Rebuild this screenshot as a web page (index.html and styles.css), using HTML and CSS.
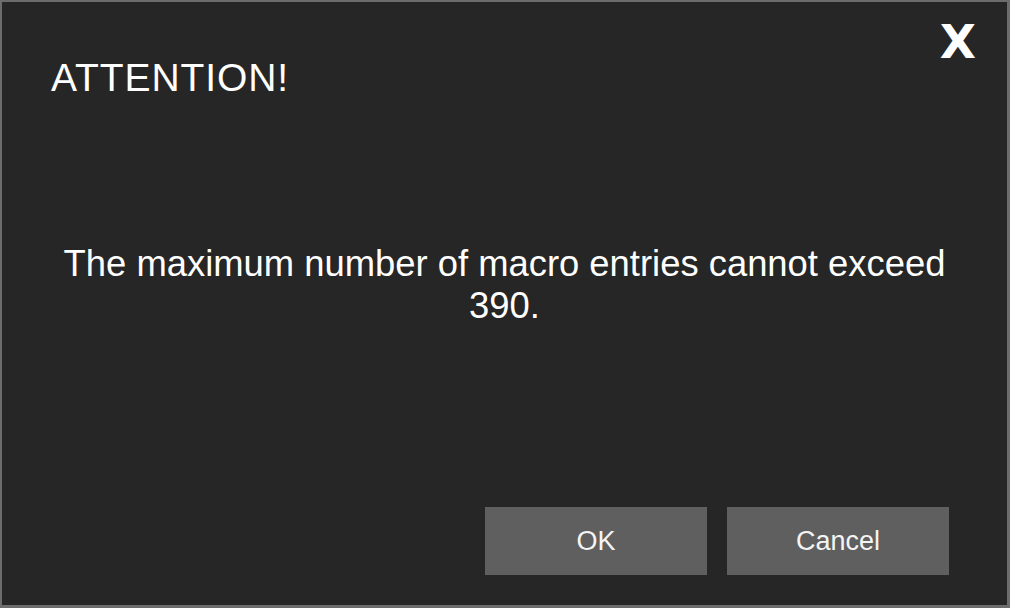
FILE: index.html
```html
<!DOCTYPE html>
<html>
<head>
<meta charset="utf-8">
<link rel="stylesheet" href="styles.css">
</head>
<body>
<div class="dialog">
  <div class="header">
    <div class="title">ATTENTION!</div>
    <div class="close">X</div>
  </div>
  <div class="message">The maximum number of macro entries cannot exceed 390.</div>
  <div class="footer">
    <div class="btn">OK</div>
    <div class="btn">Cancel</div>
  </div>
</div>
</body>
</html>
```
FILE: styles.css
```css
html, body {
  margin: 0;
  padding: 0;
  background: #262626;
}
.dialog {
  box-sizing: border-box;
  width: 1010px;
  height: 608px;
  border: 2px solid #6c6c6c;
  border-right-width: 3px;
  border-bottom-width: 3px;
  background: #262626;
  color: #ffffff;
  font-family: "Liberation Sans", Arial, sans-serif;
  display: flex;
  flex-direction: column;
}
.header {
  display: flex;
  justify-content: space-between;
  align-items: flex-start;
  padding: 0 31px 0 49px;
}
.title {
  font-size: 39px;
  margin-top: 54px;
  line-height: 44px;
  letter-spacing: 0.9px;
}
.close {
  font-family: "DejaVu Sans", sans-serif;
  font-size: 47px;
  font-weight: bold;
  line-height: 46px;
  margin-top: 17px;
}
.message {
  flex: 1;
  display: flex;
  align-items: center;
  justify-content: center;
  text-align: center;
  font-size: 36.4px;
  line-height: 42px;
  padding: 0 60px 38px;
}
.footer {
  display: flex;
  justify-content: flex-end;
  gap: 20px;
  padding: 0 58px 30px 0;
}
.btn {
  width: 222px;
  height: 68px;
  background: #5f5f5f;
  color: #f4f4f4;
  font-size: 27px;
  display: flex;
  align-items: center;
  justify-content: center;
}
```
